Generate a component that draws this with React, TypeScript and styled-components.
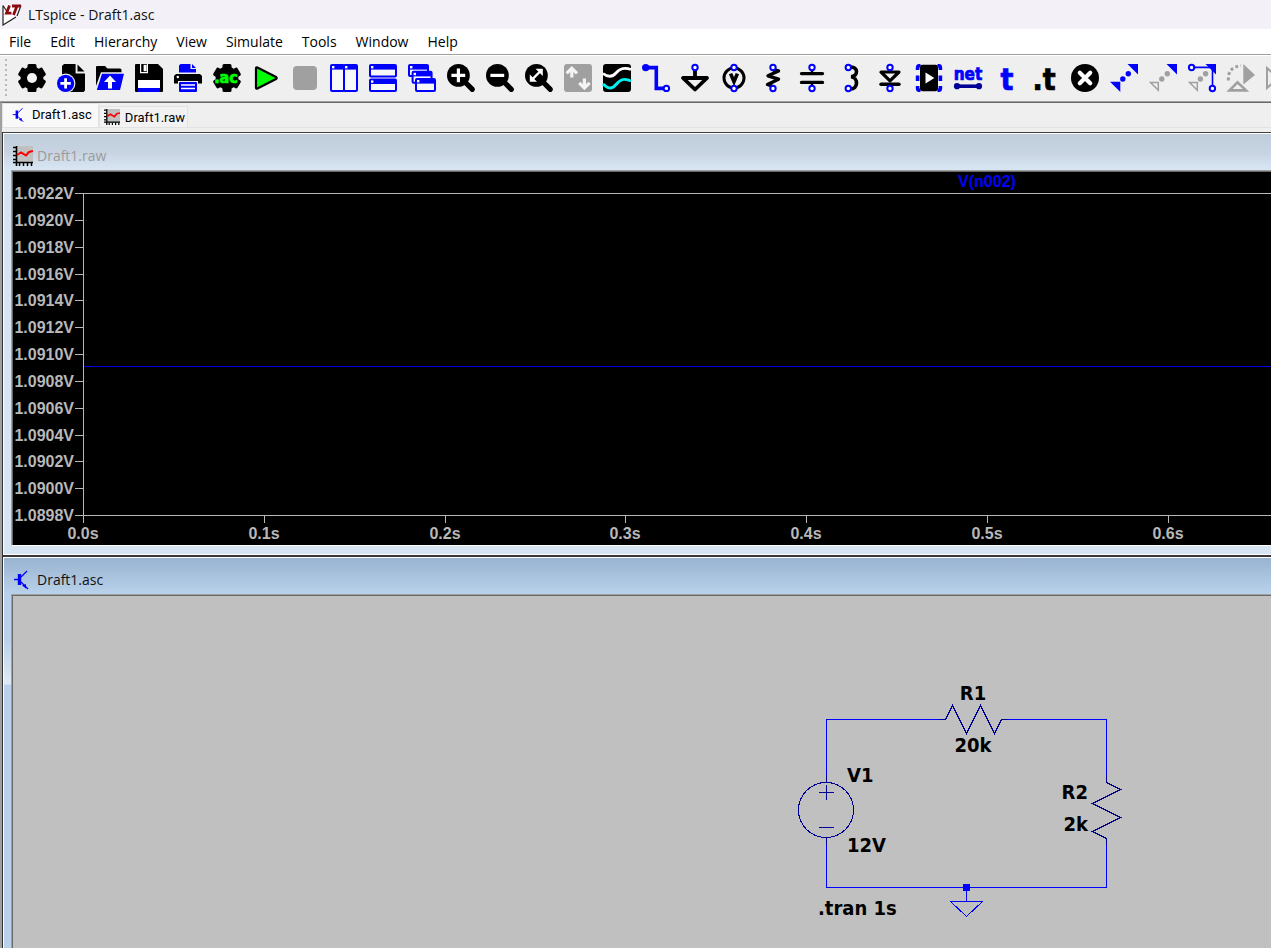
import React from 'react';
import styled, { createGlobalStyle } from 'styled-components';

const GlobalStyle = createGlobalStyle`
  * { box-sizing: border-box; }
  html, body, #root { height: 100%; margin: 0; }
  body {
    overflow: hidden;
    font-family: 'Open Sans', 'Noto Sans', sans-serif;
    font-size: 14px;
    color: #111;
    background: #efefef;
  }
`;

const BLUE = '#0000ff';
const NAVY = '#000096';
const GRAY = '#a0a0a0';
const FACE = '#efefef';
const AXIS = '#b8b8b8';

const Shell = styled.div`
  display: flex;
  flex-direction: column;
  height: 100%;
`;

const TitleBar = styled.header`
  display: flex;
  align-items: center;
  gap: 6px;
  height: 29px;
  padding-left: 2px;
  background: #f3f0f7;
  flex: none;
`;

const AppTitle = styled.h1`
  margin: 0;
  font-size: 14px;
  font-weight: 400;
  line-height: 20px;
`;

const MenuBar = styled.nav`
  display: flex;
  gap: 1px;
  height: 25px;
  background: #fff;
  flex: none;
`;

const MenuButton = styled.button`
  border: 0;
  padding: 0 9px;
  background: none;
  font: inherit;
  line-height: 24px;
  color: #000;
`;

const ToolBar = styled.div`
  display: flex;
  align-items: center;
  gap: 11px;
  height: 48px;
  padding-left: 5px;
  border-top: 1px solid ${GRAY};
  border-bottom: 1px solid ${GRAY};
  box-shadow: inset 0 1px #fff;
  background: ${FACE};
  overflow: hidden;
  flex: none;
`;

const Grip = styled.span`
  width: 2px;
  height: 38px;
  background: repeating-linear-gradient(#b8b8b8 0 2px, transparent 2px 5px);
  flex: none;
`;

const ToolButton = styled.button`
  display: block;
  width: 28px;
  height: 28px;
  border: 0;
  padding: 0;
  background: none;
  flex: none;
  svg { display: block; overflow: visible; }
`;

const Workspace = styled.div`
  display: flex;
  flex-direction: column;
  flex: 1;
  min-height: 0;
  border-top: 1px solid #696969;
  border-left: 2px solid ${GRAY};
`;

const TabStrip = styled.div`
  display: flex;
  align-items: flex-end;
  height: 25px;
  border-bottom: 1px solid #e2e2e2;
  flex: none;
`;

const Tab = styled.button<{ $active?: boolean }>`
  display: flex;
  align-items: center;
  gap: 5px;
  height: ${p => (p.$active ? 24 : 21)}px;
  border: 1px solid #e2e2e2;
  border-bottom: 0;
  padding: 0 ${p => (p.$active ? 6 : 2)}px ${p => (p.$active ? 2 : 0)}px ${p => (p.$active ? 9 : 4)}px;
  background: ${p => (p.$active ? '#f9f9f9' : '#f2f2f2')};
  font: 13px Roboto, sans-serif;
  color: #000;
`;

const Mdi = styled.main`
  display: flex;
  flex-direction: column;
  flex: 1;
  min-height: 0;
  margin-top: 4px;
  border-top: 1px solid #404040;
  border-left: 1px solid #303030;
`;

const Child = styled.section<{ $active?: boolean }>`
  display: flex;
  flex-direction: column;
  flex: ${p => (p.$active ? '1 0 0' : 'none')};
  min-height: 0;
  border-top: 1px solid #fff;
  border-left: 1px solid #fff;
  padding: 0 0 ${p => (p.$active ? 0 : 8)}px 7px;
  background: ${p =>
    p.$active
      ? 'linear-gradient(#99b4d1 0, #b9d1ea 36px, #b9d1ea 80px, #dfeaf6 126px, #b9d1ea 127px)'
      : 'linear-gradient(#bfcddb 0, #c7d3e0 18px, #d7e4f2 34px)'};
`;

const ChildTitle = styled.h2<{ $active?: boolean }>`
  display: flex;
  align-items: center;
  gap: 4px;
  height: 36px;
  margin: 0;
  padding: 8px 0 0 2px;
  font-size: 14px;
  font-weight: 400;
  line-height: 20px;
  color: ${p => (p.$active ? '#111' : '#9b9b9b')};
`;

const ClientArea = styled.div<{ $kind: 'plot' | 'schematic' }>`
  flex: ${p => (p.$kind === 'plot' ? 'none' : '1')};
  min-height: 0;
  border-top: 1px solid ${GRAY};
  border-left: 1px solid ${GRAY};
  border-bottom: ${p => (p.$kind === 'plot' ? 1 : 0)}px solid #fff;
  background: ${p => (p.$kind === 'plot' ? '#000' : '#c0c0c0')};
  box-shadow: inset 1px 1px #696969;
  overflow: hidden;
  svg { display: block; }
`;

const Seam = styled.div`
  height: 3px;
  border-top: 1px solid #fff;
  background: #383838;
  flex: none;
`;

const AxisText = styled.text<{ $color?: string }>`
  font: bold 16px 'Liberation Sans', Arial, sans-serif;
  fill: ${p => p.$color ?? AXIS};
`;

const PartText = styled.text`
  font: bold 20px 'DejaVu Sans Condensed', 'DejaVu Sans', sans-serif;
  font-stretch: condensed;
  fill: #000;
`;

const GlyphText = styled.text<{ $size: number; $color: string }>`
  font: bold ${p => p.$size}px 'DejaVu Sans Condensed', 'DejaVu Sans', sans-serif;
  fill: ${p => p.$color};
  stroke: ${p => p.$color};
  stroke-width: 0.7;
`;

const Ring = ({ x, y }: { x: number; y: number }) => (
  <circle cx={x} cy={y} r="2.7" fill="#fff" stroke={BLUE} strokeWidth="2" />
);

const GearShape = () => (
  <g>
    <circle cx="14" cy="14" r="11.4" />
    {[0, 60, 120].map(a => (
      <rect key={a} x="9.5" y="0" width="9" height="28" rx="1.5" transform={`rotate(${a} 14 14)`} />
    ))}
  </g>
);

const MiniWindow = ({ x, y, w, h }: { x: number; y: number; w: number; h: number }) => (
  <g>
    <rect x={x + 1} y={y + 1} width={w - 2} height={h - 2} rx="1" fill="#f8f8f8" stroke={BLUE} strokeWidth="2" />
    <rect x={x + 1} y={y + 1} width={w - 2} height="4.6" fill={BLUE} />
    <rect x={x + 2} y={y + 2} width="2.4" height="2.4" fill="#fff" />
  </g>
);

const Lens = ({ children }: { children: React.ReactNode }) => (
  <g>
    <path d="M18 18L25.3 25.3" stroke="#000" strokeWidth="5.2" strokeLinecap="round" />
    <circle cx="11.4" cy="11.4" r="11.4" />
    <g fill="none" stroke="#fff" strokeWidth="3.2">{children}</g>
  </g>
);

const tools: { label: string; art: React.ReactNode }[] = [
  { label: 'Settings', art: <><GearShape /><circle cx="14" cy="14" r="5" fill="#f4f4f4" /></> },
  {
    label: 'New schematic',
    art: (
      <>
        <path d="M7 0H18.6V9.4H28V26.5L26.5 28H6.5L5 26V2Z" />
        <path d="M20.5 0.5L27.5 7.6H20.5Z" />
        <circle cx="8.6" cy="19.4" r="9.8" fill={FACE} />
        <circle cx="8.6" cy="19.4" r="8.6" fill={BLUE} />
        <path d="M8.6 14.2V24.6M3.4 19.4H13.8" stroke="#fff" strokeWidth="2.8" />
      </>
    ),
  },
  {
    label: 'Open',
    art: (
      <>
        <path d="M0 3Q0 2 1 2H9L11.5 4.5H24Q25.5 4.5 25.5 6V8.3H5L0 22Z" />
        <path d="M6 9.8H28L24 26H0.8Z" fill={BLUE} />
        <path d="M14 24.5V16" stroke="#fff" strokeWidth="4" />
        <path d="M14 11.5L20 18H8Z" fill="#fff" />
      </>
    ),
  },
  {
    label: 'Save',
    art: (
      <>
        <path d="M1 0H23L28 5V27Q28 28 27 28H1Q0 28 0 27V1Q0 0 1 0Z" />
        <path d="M5.6 0V8.6H12.4V0" fill="none" stroke="#fff" strokeWidth="1.2" />
        <rect x="8.6" y="0.8" width="3" height="6.4" fill="#fff" />
        <rect x="3" y="16" width="22" height="8" fill="#fff" />
        <rect x="3" y="24" width="22" height="4" fill={BLUE} />
      </>
    ),
  },
  {
    label: 'Print',
    art: (
      <>
        <path d="M6.5 0H16.5V5H22V8.5H5V1.5Z" fill={BLUE} />
        <path d="M18 0L22 4H18Z" fill={BLUE} />
        <path d="M2 10H26L28 12V19.5H24V17H4V19.5H0V12Z" />
        <circle cx="3.8" cy="13" r="1.2" fill="#fff" />
        <rect x="5" y="18" width="18" height="10" rx="1" fill={BLUE} />
        <path d="M7 21H21M7 24.5H21" stroke="#fff" strokeWidth="1.4" />
      </>
    ),
  },
  {
    label: 'Configure analysis',
    art: (
      <>
        <GearShape />
        <GlyphText $size={16} $color="#00ff00" x="13" y="19" textAnchor="middle">.ac</GlyphText>
      </>
    ),
  },
  {
    label: 'Run',
    art: <path d="M4 4.5Q4 3 5.4 3.6L24 13Q25.4 14 24 15L5.4 24.6Q4 25.2 4 23.6Z" fill="#00ff00" stroke="#000" strokeWidth="2.2" />,
  },
  { label: 'Stop', art: <rect x="2" y="2" width="24" height="24" rx="4" fill={GRAY} /> },
  { label: 'Tile vertically', art: <><MiniWindow x={0} y={0} w={15} h={28} /><MiniWindow x={13} y={0} w={15} h={28} /></> },
  { label: 'Tile horizontally', art: <><MiniWindow x={0} y={0} w={28} h={13.4} /><MiniWindow x={0} y={14.4} w={28} h={13.6} /></> },
  {
    label: 'Cascade',
    art: <><MiniWindow x={0} y={0} w={21} h={13} /><MiniWindow x={3.6} y={6.8} w={21} h={13} /><MiniWindow x={7} y={14} w={21} h={14} /></>,
  },
  { label: 'Zoom in', art: <Lens><path d="M11.4 4.4V18.2M4.4 11.4H18.2" /></Lens> },
  { label: 'Zoom out', art: <Lens><path d="M4.4 11.4H18.2" /></Lens> },
  {
    label: 'Zoom to fit',
    art: (
      <Lens>
        <path d="M7 15.6L15.6 7" strokeWidth="2.4" />
        <path d="M10.5 4.8H17.8V12Z M4.8 10.5V17.8H12Z" fill="#fff" stroke="none" />
      </Lens>
    ),
  },
  {
    label: 'Autorange',
    art: (
      <>
        <rect width="28" height="28" rx="3" fill={GRAY} />
        <g fill="none" stroke="#f4f4f4" strokeWidth="3.2">
          <path d="M7.8 13.4V5M2.6 9.4L7.8 4.2L13 9.4" />
          <path d="M20.4 14.4V23M15.2 18.8L20.4 24L25.6 18.8" />
        </g>
      </>
    ),
  },
  {
    label: 'Waveforms',
    art: (
      <>
        <rect width="28" height="28" rx="3" />
        <path d="M0 9.5C5 13.5 9 13.5 13 9S21 3 28 5.5" fill="none" stroke="#fff" strokeWidth="2.8" />
        <path d="M0 20C5 25 9 25.5 13 20.5S21 13.5 28 17" fill="none" stroke="#00f0f0" strokeWidth="3" />
      </>
    ),
  },
  {
    label: 'Wire',
    art: (
      <>
        <path d="M3.7 3.6H14.3V24.4H22" fill="none" stroke={BLUE} strokeWidth="3.6" />
        <circle cx="3.7" cy="3.6" r="3.7" fill={BLUE} />
        <Ring x={24.4} y={24.4} />
      </>
    ),
  },
  {
    label: 'Ground',
    art: (
      <>
        <path d="M14 6V13M2 14H26L14 25.5Z" fill="none" stroke="#000" strokeWidth="3.8" strokeLinejoin="round" />
        <Ring x={14} y={3.5} />
      </>
    ),
  },
  {
    label: 'Voltage source',
    art: (
      <>
        <circle cx="14" cy="14" r="10" fill="none" stroke="#000" strokeWidth="3" />
        <path d="M10.6 9.6L14 17.6L17.4 9.6" fill="none" stroke="#000" strokeWidth="3.6" />
        <Ring x={14} y={3.5} /><Ring x={14} y={24.5} />
      </>
    ),
  },
  {
    label: 'Resistor',
    art: (
      <>
        <path d="M14 5.5L19.5 7L9 11.8L19.5 15.2L8.5 20.5L14 22.5" fill="none" stroke="#000" strokeWidth="3.4" strokeLinejoin="round" />
        <Ring x={14} y={3.5} /><Ring x={14} y={24.5} />
      </>
    ),
  },
  {
    label: 'Capacitor',
    art: (
      <>
        <path d="M3.5 9.6H24.5M3.5 18.4H24.5" stroke="#000" strokeWidth="3.4" strokeLinecap="round" />
        <path d="M14 5V9M14 19V23" stroke="#000" strokeWidth="2.4" />
        <Ring x={14} y={3.5} /><Ring x={14} y={24.5} />
      </>
    ),
  },
  {
    label: 'Inductor',
    art: (
      <>
        <path d="M13 3C21.5 2 21.5 12.5 14 12.8C21.5 13.4 21.5 25.6 13 25" fill="none" stroke="#000" strokeWidth="3.6" />
        <Ring x={11.3} y={3.5} /><Ring x={11.3} y={24.5} />
      </>
    ),
  },
  {
    label: 'Diode',
    art: (
      <>
        <path d="M5 8H23L14 16.8Z" fill="none" stroke="#000" strokeWidth="3.2" strokeLinejoin="round" />
        <path d="M5 20.2H23" stroke="#000" strokeWidth="3.4" strokeLinecap="round" />
        <Ring x={14} y={3.5} /><Ring x={14} y={24.5} />
      </>
    ),
  },
  {
    label: 'Component',
    art: (
      <>
        <path d="M5.5 1.7H4Q2.6 1.7 2.6 4V6M22.5 1.7H24Q25.4 1.7 25.4 4V6M2.6 11.4V17M25.4 11.4V17M5.5 26.3H4Q2.6 26.3 2.6 24V22M22.5 26.3H24Q25.4 26.3 25.4 24V22" fill="none" stroke={BLUE} strokeWidth="3.6" />
        <rect x="5" y="0.8" width="18" height="26.4" rx="2.4" />
        <path d="M10.5 8.6L19.4 14L10.5 19.4Z" fill="#fff" />
      </>
    ),
  },
  {
    label: 'Net name',
    art: (
      <>
        <GlyphText $size={17} $color={BLUE} x="14" y="16" textAnchor="middle">net</GlyphText>
        <path d="M3 22.2H25" stroke={NAVY} strokeWidth="3.6" />
        <circle cx="3" cy="22.2" r="3.1" fill={NAVY} /><circle cx="25" cy="22.2" r="3.1" fill={NAVY} />
      </>
    ),
  },
  { label: 'Text', art: <GlyphText $size={30} $color={BLUE} x="14" y="26" textAnchor="middle">t</GlyphText> },
  { label: 'SPICE directive', art: <GlyphText $size={30} $color="#000" x="12" y="26" textAnchor="middle">.t</GlyphText> },
  {
    label: 'Delete',
    art: <><circle cx="14" cy="14" r="14" /><path d="M8.8 8.8L19.2 19.2M19.2 8.8L8.8 19.2" stroke="#fff" strokeWidth="4.2" strokeLinecap="round" /></>,
  },
  {
    label: 'Duplicate',
    art: (
      <g fill={BLUE}>
        <path d="M17.5 0H28V10.5Z M0 17.8H10.3V28Z" />
        <circle cx="18.3" cy="9.8" r="2.7" /><circle cx="12.8" cy="15" r="2.7" />
      </g>
    ),
  },
  {
    label: 'Move',
    art: (
      <>
        <path d="M17.5 0H28V10.5Z" fill={BLUE} />
        <path d="M1.5 18.5H9.3V26.3Z" fill="none" stroke={GRAY} strokeWidth="1.5" />
        <circle cx="18.3" cy="9.8" r="2.7" fill={GRAY} /><circle cx="12.8" cy="15" r="2.7" fill={GRAY} />
      </>
    ),
  },
  {
    label: 'Drag',
    art: (
      <>
        <path d="M17.5 0H28V10.5Z" fill={BLUE} />
        <path d="M3.5 3.4H24.5V24" fill="none" stroke={BLUE} strokeWidth="1.6" />
        <path d="M1.5 18.5H9.3V26.3Z" fill="none" stroke={GRAY} strokeWidth="1.5" />
        <circle cx="17.6" cy="9.8" r="2.7" fill={GRAY} /><circle cx="12.4" cy="15" r="2.7" fill={GRAY} />
        <Ring x={3.6} y={3.5} /><Ring x={24.4} y={24.5} />
      </>
    ),
  },
  {
    label: 'Rotate',
    art: (
      <>
        <path d="M16.3 0L28 11L16.3 20.5Z" fill={GRAY} />
        <path d="M1.4 16.5Q0.5 3 14 1.8" fill="none" stroke={GRAY} strokeWidth="3" strokeDasharray="3 2.4" />
        <path d="M2.5 26.4L10.5 18.4L19 26.4Z" fill="none" stroke={GRAY} strokeWidth="2.6" />
      </>
    ),
  },
  { label: 'Mirror', art: <path d="M1 4V24L12 14Z" fill="none" stroke={GRAY} strokeWidth="2" /> },
];

const Logo = () => (
  <svg width="20" height="22" viewBox="0 0 20 22" aria-hidden="true">
    <path d="M1 2L19 1L14 11L1 21Z" fill="#fff" />
    <path d="M1 1.5V21L14 13M1 1.5L6 9M19 1.5L15 12" fill="none" stroke="#222" strokeWidth="1.2" />
    <path d="M7.5 1.5L4.5 9.2H9.5M10 2H19M15 2L11.5 11" fill="none" stroke="#8c0a10" strokeWidth="2.8" />
  </svg>
);

const SchematicIcon = ({ width = 20, height = 20 }: { width?: number; height?: number }) => (
  <svg width={width} height={height} viewBox="0 0 20 20" aria-hidden="true">
    <path d="M1 9.5H6M8 7L14 1M8 12L15 19" fill="none" stroke={BLUE} strokeWidth="1.3" />
    <path d="M6.5 4V15" stroke={BLUE} strokeWidth="3.4" />
    <path d="M9 15.5L13 14V18.5Z" fill={BLUE} />
  </svg>
);

const PlotIcon = ({ size = 20 }: { size?: number }) => (
  <svg width={size} height={size} viewBox="0 0 20 20" aria-hidden="true">
    <rect x="3" width="17" height="17" fill="#c0c0c0" />
    <path d="M3.5 0V20M0 16.5H20" stroke="#000" strokeWidth="1.6" />
    <path d="M0 1.5H3M0 5.5H3M0 9.5H3M0 13.5H3M6.5 17V20M10.5 17V20M14.5 17V20M18.5 17V20" stroke="#000" strokeWidth="1.5" />
    <path d="M4 9L8 6.5L13 9.5L16 6L20 5" fill="none" stroke="#ff0000" strokeWidth="2" />
  </svg>
);

const voltTicks = [
  '1.0922V', '1.0920V', '1.0918V', '1.0916V', '1.0914V', '1.0912V', '1.0910V',
  '1.0908V', '1.0906V', '1.0904V', '1.0902V', '1.0900V', '1.0898V',
];
const timeTicks = ['0.0s', '0.1s', '0.2s', '0.3s', '0.4s', '0.5s', '0.6s'];

const PLOT_TOP = 22;
const PLOT_BOTTOM = 344;
const PLOT_LEFT = 71;
const TIME_STEP = 180.8;

const Waveform = () => (
  <svg width="100%" height="374" role="img" aria-label="Waveform plot">
    <g stroke={AXIS} shapeRendering="crispEdges">
      <line x1={PLOT_LEFT + 0.5} y1={PLOT_TOP} x2={PLOT_LEFT + 0.5} y2={PLOT_BOTTOM + 8} />
      <line x1={PLOT_LEFT - 8} y1={PLOT_TOP + 0.5} x2="100%" y2={PLOT_TOP + 0.5} />
      <line x1={PLOT_LEFT - 8} y1={PLOT_BOTTOM + 0.5} x2="100%" y2={PLOT_BOTTOM + 0.5} />
      {voltTicks.map((t, i) => {
        const y = Math.round(PLOT_TOP + ((PLOT_BOTTOM - PLOT_TOP) * i) / 12) + 0.5;
        return <line key={t} x1={PLOT_LEFT - 8} x2={PLOT_LEFT} y1={y} y2={y} />;
      })}
      {timeTicks.map((t, i) => {
        const x = Math.round(PLOT_LEFT + TIME_STEP * i) + 0.5;
        return <line key={t} x1={x} x2={x} y1={PLOT_BOTTOM} y2={PLOT_BOTTOM + 8} />;
      })}
    </g>
    <line x1={PLOT_LEFT + 1} x2="100%" y1="195.5" y2="195.5" stroke="#0000e0" shapeRendering="crispEdges" />
    {voltTicks.map((t, i) => (
      <AxisText key={t} x={PLOT_LEFT - 9} y={Math.round(PLOT_TOP + ((PLOT_BOTTOM - PLOT_TOP) * i) / 12) + 6} textAnchor="end">{t}</AxisText>
    ))}
    {timeTicks.map((t, i) => (
      <AxisText key={t} x={Math.round(PLOT_LEFT + TIME_STEP * i)} y={PLOT_BOTTOM + 24} textAnchor="middle">{t}</AxisText>
    ))}
    <AxisText $color={BLUE} x="975" y="16" textAnchor="middle">V(n002)</AxisText>
  </svg>
);

const Circuit = () => (
  <svg width="100%" height="353" role="img" aria-label="Circuit schematic">
    <g fill="none" stroke={BLUE} shapeRendering="crispEdges">
      <path d="M814.5 180V124.5H927M996 124.5H1094.5V180M1094.5 250V292.5H814.5V250M954.5 292V306.5" />
      <path d="M938.5 306.5H970.5L954.5 321.5Z" />
    </g>
    <g fill="none" stroke={NAVY} shapeRendering="crispEdges">
      <path d="M927 124.5H933.5L940.5 110.5L954.5 138.5L968.5 110.5L982.5 138.5L989.5 124.5H996" />
      <path d="M1094.5 180V187.5L1108.5 194.5L1080.5 208.5L1108.5 222.5L1080.5 236.5L1094.5 243.5V250" />
      <circle cx="814" cy="215" r="27.5" />
      <path d="M814.5 180V187M814.5 243V250M807 197.5H822M814.5 190V205M807 232.5H822" />
    </g>
    <rect x="951" y="289" width="7" height="7" fill={BLUE} />
    <PartText x="961" y="105" textAnchor="middle">R1</PartText>
    <PartText x="961" y="157" textAnchor="middle">20k</PartText>
    <PartText x="835" y="187">V1</PartText>
    <PartText x="835" y="257">12V</PartText>
    <PartText x="1076" y="204" textAnchor="end">R2</PartText>
    <PartText x="1076" y="236" textAnchor="end">2k</PartText>
    <PartText x="806" y="320">.tran 1s</PartText>
  </svg>
);

const menus = ['File', 'Edit', 'Hierarchy', 'View', 'Simulate', 'Tools', 'Window', 'Help'];

export default function App() {
  return (
    <Shell>
      <GlobalStyle />
      <TitleBar>
        <Logo />
        <AppTitle>LTspice - Draft1.asc</AppTitle>
      </TitleBar>
      <MenuBar>
        {menus.map(m => <MenuButton key={m}>{m}</MenuButton>)}
      </MenuBar>
      <ToolBar role="toolbar">
        <Grip />
        {tools.map(t => (
          <ToolButton key={t.label} aria-label={t.label}>
            <svg width="28" height="28" viewBox="0 0 28 28">{t.art}</svg>
          </ToolButton>
        ))}
      </ToolBar>
      <Workspace>
        <TabStrip role="tablist">
          <Tab role="tab" aria-selected="true" $active><SchematicIcon width={15} height={16} />Draft1.asc</Tab>
          <Tab role="tab" aria-selected="false"><PlotIcon size={16} />Draft1.raw</Tab>
        </TabStrip>
        <Mdi>
          <Child>
            <ChildTitle><PlotIcon />Draft1.raw</ChildTitle>
            <ClientArea $kind="plot"><Waveform /></ClientArea>
          </Child>
          <Seam />
          <Child $active>
            <ChildTitle $active><SchematicIcon />Draft1.asc</ChildTitle>
            <ClientArea $kind="schematic"><Circuit /></ClientArea>
          </Child>
        </Mdi>
      </Workspace>
    </Shell>
  );
}
